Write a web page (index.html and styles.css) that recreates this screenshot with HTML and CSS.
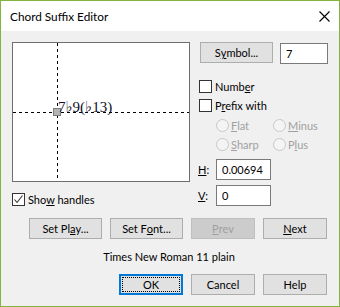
FILE: index.html
```html
<!DOCTYPE html>
<html lang="en">
<head>
  <meta charset="UTF-8" />
  <title>Chord Suffix Editor</title>
  <link rel="stylesheet" href="styles.css">
</head>
<body>
  <div class="window">
    <div class="titlebar">
      <span class="title">Chord Suffix Editor</span>
      <svg class="close" width="11" height="11" viewBox="0 0 11 11">
        <path d="M0.5 0.5 L10.5 10.5 M10.5 0.5 L0.5 10.5" stroke="#000" stroke-width="1.1" fill="none"/>
      </svg>
    </div>

    <div class="content">
      <div class="top">
        <div class="left">
          <div class="preview">
            <svg width="176" height="138" viewBox="0 0 176 138">
              <line x1="44.5" y1="0" x2="44.5" y2="138" stroke="#000" stroke-dasharray="3,3"/>
              <line x1="0" y1="69.5" x2="176" y2="69.5" stroke="#000" stroke-dasharray="3,3"/>
              <rect x="40.5" y="65.5" width="7" height="7" fill="#b4b4b4" stroke="#7c7c7c"/>
              <text class="suffix" x="45" y="69">7<tspan class="flat">♭</tspan>9(<tspan class="flat">♭</tspan>13)</text>
            </svg>
          </div>
          <div class="check show">
            <span class="box">
              <svg width="11" height="11" viewBox="0 0 11 11">
                <path d="M1.5 5.5 L4 8.5 L9.5 1.5" stroke="#333" stroke-width="1.1" fill="none"/>
              </svg>
            </span>
            <span>Sho<u>w</u> handles</span>
          </div>
        </div>

        <div class="right">
          <div class="symbol-row">
            <div class="btn symbol">S<u>y</u>mbol...</div>
            <div class="field small">7</div>
          </div>
          <div class="check number">
            <span class="box"></span>
            <span>Numb<u>e</u>r</span>
          </div>
          <div class="check prefix">
            <span class="box"></span>
            <span>P<u>r</u>efix with</span>
          </div>
          <div class="radios">
            <div class="radio"><span class="dot"></span><span><u>F</u>lat</span></div>
            <div class="radio"><span class="dot"></span><span><u>M</u>inus</span></div>
            <div class="radio"><span class="dot"></span><span><u>S</u>harp</span></div>
            <div class="radio"><span class="dot"></span><span>P<u>l</u>us</span></div>
          </div>
          <div class="offset h">
            <span class="lbl"><u>H</u>:</span>
            <div class="field">0.00694</div>
          </div>
          <div class="offset v">
            <span class="lbl"><u>V</u>:</span>
            <div class="field">0</div>
          </div>
        </div>
      </div>

      <div class="btn-row first">
        <div class="btn wide">Set Pl<u>a</u>y...</div>
        <div class="btn wide">Set F<u>o</u>nt...</div>
        <div class="btn disabled"><u>P</u>rev</div>
        <div class="btn"><u>N</u>ext</div>
      </div>

      <div class="font-info">Times New Roman 11 plain</div>

      <div class="btn-row second">
        <div class="btn default"><span class="focus">OK</span></div>
        <div class="btn">Cancel</div>
        <div class="btn">Help</div>
      </div>
    </div>
  </div>
</body>
</html>
```

FILE: styles.css
```css
:root {
  --frame: #83b440;
  --face: #f0f0f0;
  --btn: #e1e1e1;
  --btn-border: #adadad;
  --edge: #7a7a7a;
  --muted: #a0a0a0;
  --accent: #0078d7;
}

* {
  box-sizing: border-box;
  margin: 0;
  padding: 0;
}

html, body {
  background: #fff;
  font-family: Lato, "Liberation Sans", Arial, sans-serif;
  font-size: 11px;
  color: #000;
}

u {
  text-decoration: underline;
  text-underline-offset: 1px;
}

.window {
  width: 340px;
  height: 307px;
  border: 1px solid var(--frame);
  background: var(--face);
  display: flex;
  flex-direction: column;
}

.titlebar {
  height: 30px;
  background: #fff;
  display: flex;
  align-items: center;
  justify-content: space-between;
  padding: 0 9px 0 9px;
}

.title {
  font-size: 11.8px;
  padding-top: 1px;
}

.close {
  display: block;
  margin-top: 1px;
}

.content {
  padding: 11px 11px 0 11px;
}

.top {
  display: flex;
  gap: 8px;
}

.left {
  width: 178px;
}

.preview {
  height: 140px;
  background: #fff;
  border: 1px solid #6e6e6e;
}

.preview svg {
  display: block;
}

.suffix {
  font-family: "Liberation Serif", "DejaVu Serif", serif;
  font-size: 15px;
  fill: #101028;
}

.suffix .flat {
  font-family: "DejaVu Sans", serif;
  font-size: 15px;
}

/* checkboxes */
.check {
  display: flex;
  align-items: center;
  gap: 3px;
  height: 13px;
}

.box {
  width: 13px;
  height: 13px;
  border: 1px solid #333;
  background: #fff;
  display: flex;
  align-items: center;
  justify-content: center;
}

.box svg {
  display: block;
}

.show {
  margin-top: 11px;
}

.right {
  width: 130px;
}

.symbol-row {
  display: flex;
  align-items: flex-start;
}

.btn {
  height: 21px;
  width: 64px;
  background: var(--btn);
  border: 1px solid var(--btn-border);
  display: flex;
  align-items: center;
  justify-content: center;
}

.btn.wide,
.btn.symbol {
  width: 73px;
}

.btn.symbol {
  margin-left: 2px;
}

.btn.disabled {
  background: #cccccc;
  border-color: #bfbfbf;
  color: var(--muted);
}

.btn.default {
  border: 2px solid var(--accent);
}

.focus {
  width: 58px;
  height: 15px;
  border: 1px dotted #000;
  display: flex;
  align-items: center;
  justify-content: center;
}

.field {
  height: 21px;
  width: 55px;
  background: #fff;
  border: 1px solid var(--edge);
  padding-left: 5px;
  display: flex;
  align-items: center;
}

.field.small {
  width: 48px;
  margin-left: 7px;
  margin-top: 1px;
}

.number {
  margin-top: 16px;
  margin-left: 1px;
}

.prefix {
  margin-top: 6px;
  margin-left: 1px;
}

/* disabled radio group */
.radios {
  margin-top: 7px;
  margin-left: 18px;
  display: grid;
  grid-template-columns: 57px auto;
  row-gap: 6px;
}

.radio {
  display: flex;
  align-items: center;
  gap: 2px;
  height: 13px;
  color: var(--muted);
}

.dot {
  width: 13px;
  height: 13px;
  border-radius: 50%;
  border: 1px solid #c8c8c8;
  background: #f4f4f4;
}

.offset {
  display: flex;
  align-items: center;
}

.offset .lbl {
  width: 18px;
}

.offset.h {
  margin-top: 8px;
}

.offset.v {
  margin-top: 5px;
}

.btn-row {
  display: flex;
  justify-content: flex-end;
  gap: 8px;
  margin-right: 1px;
}

.btn-row.first {
  margin-top: 12px;
}

.font-info {
  text-align: center;
  height: 16px;
  line-height: 16px;
  margin-top: 10px;
  padding-right: 2px;
}

.btn-row.second {
  margin-top: 9px;
}
```
